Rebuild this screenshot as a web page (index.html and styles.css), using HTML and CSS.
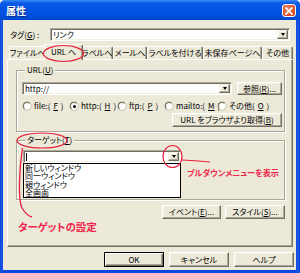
FILE: index.html
```html
<!DOCTYPE html>
<html lang="ja">
<head>
<meta charset="utf-8">
<title>属性</title>
<link rel="stylesheet" href="styles.css">
</head>
<body>
<div class="window">
  <div class="titlebar">
    <span class="title">属性</span>
    <span class="close"><svg width="8" height="8" viewBox="0 0 8 8"><path d="M1 1L7 7M7 1L1 7" stroke="#fff" stroke-width="1.7" stroke-linecap="square"/></svg></span>
  </div>
  <div class="client">
    <div class="tagrow">
      <span class="lbl">タグ(<u>G</u>) :</span>
      <div class="combo tagcombo"><span class="val">リンク</span><span class="drop"><i></i></span></div>
    </div>
    <div class="tabs">
      <div class="tabbar">
        <span class="tab t1">ファイルへ</span>
        <span class="tab t2 active">URL へ</span>
        <span class="tab t3">ラベルへ</span>
        <span class="tab t4">メールへ</span>
        <span class="tab t5">ラベルを付ける</span>
        <span class="tab t6">未保存ページへ</span>
        <span class="tab t7">その他</span>
      </div>
      <div class="panel">
        <fieldset class="group urlgroup">
          <legend>URL(<u>U</u>)</legend>
          <div class="urlrow">
            <div class="combo urlcombo"><span class="val">http://</span><span class="drop"><i></i></span></div>
            <span class="btn browse">参照(<u>R</u>)...</span>
          </div>
          <div class="radios">
            <span class="radio r1"><i class="dot"></i>file:(<u>F</u>)</span>
            <span class="radio r2"><i class="dot on"></i>http:(<u>H</u>)</span>
            <span class="radio r3"><i class="dot"></i>ftp:(<u>P</u>)</span>
            <span class="radio r4"><i class="dot"></i>mailto:(<u>M</u>)</span>
            <span class="radio r5"><i class="dot"></i>その他(<u>O</u>)</span>
          </div>
          <div class="getrow"><span class="btn getbtn">URL をブラウザより取得(<u>B</u>)</span></div>
        </fieldset>
        <fieldset class="group targetgroup">
          <legend>ターゲット(<u>T</u>)</legend>
          <div class="tcombo-wrap">
            <div class="combo tcombo"><span class="val"><span class="caret"></span></span><span class="drop"><i></i></span></div>
            <ul class="dropdown">
              <li>新しいウィンドウ</li>
              <li>同一ウィンドウ</li>
              <li>親ウィンドウ</li>
              <li>全画面</li>
            </ul>
          </div>
        </fieldset>
        <div class="trow">
          <span class="btn evbtn">イベント(<u>E</u>)...</span>
          <span class="btn stbtn">スタイル(<u>S</u>)...</span>
        </div>
      </div>
    </div>
    <div class="footer">
      <span class="btn fbtn default">OK</span>
      <span class="btn fbtn">キャンセル</span>
      <span class="btn fbtn">ヘルプ</span>
    </div>
  </div>
  <svg class="annot" width="300" height="273" viewBox="0 0 300 273">
    <ellipse cx="63.5" cy="53.5" rx="20" ry="8" fill="none" stroke="#e8203c" stroke-width="1.2"/>
    <ellipse cx="42" cy="140.5" rx="25" ry="7.5" fill="none" stroke="#e8203c" stroke-width="1.2"/>
    <path d="M22.5 148 C19 170 18 200 22 208 C25 213 28 216 32 217" fill="none" stroke="#e8203c" stroke-width="1.3"/>
    <ellipse cx="172.5" cy="156.5" rx="9.5" ry="11" fill="none" stroke="#e8203c" stroke-width="1.2"/>
    <path d="M182 160 L196 160.8 L210 162" fill="none" stroke="#e8203c" stroke-width="1"/>
  </svg>
  <span class="note n1">プルダウンメニューを表示</span>
  <span class="note n2">ターゲットの設定</span>
</div>
</body>
</html>
```
FILE: styles.css
```css
* { box-sizing: border-box; }
html, body { margin: 0; padding: 0; }
body {
  width: 300px;
  height: 273px;
  overflow: hidden;
  font-family: "Noto Sans CJK JP", "Liberation Sans", sans-serif;
  font-size: 8px;
  font-feature-settings: "palt";
  color: #000;
  background: #ffffff;
}
u { text-decoration: underline; text-underline-offset: 1px; }

.window {
  position: relative;
  width: 300px;
  height: 273px;
  display: flex;
  flex-direction: column;
  border-radius: 5px 5px 0 0;
  background: linear-gradient(to right, #0a37c8 0, #1a5ceb 1px, #0d47dc 3px, #0d47dc 296px, #1a5ceb 298px, #0a37c8 300px);
}

.titlebar {
  height: 20px;
  flex: none;
  display: flex;
  align-items: center;
  padding-left: 6px;
  padding-right: 4px;
  background: linear-gradient(to bottom, #3c8cf6 0, #0a5ae8 3px, #0354e3 9px, #0051df 15px, #0046cc 20px);
  border-radius: 5px 5px 0 0;
}
.title {
  color: #fff;
  font-weight: bold;
  font-size: 10px;
  line-height: 10px;
  text-shadow: 1px 1px #0a2c8c;
  flex: 1;
  padding-top: 1px;
}
.close {
  width: 14px;
  height: 13px;
  margin-top: 1px;
  border: 1px solid #fff;
  border-radius: 3px;
  background: radial-gradient(circle at 40% 35%, #f08a6c, #e0572e 55%, #c9401c);
  display: flex;
  align-items: center;
  justify-content: center;
}

.client {
  flex: 1;
  margin: 0 4px 3px 3px;
  background: #ece9d8;
  display: flex;
  flex-direction: column;
}

/* classic 3D helpers */
.combo {
  position: relative;
  background: #fff;
  border: 1px solid;
  border-color: #aca899 #fff #fff #aca899;
  box-shadow: inset 1px 1px #716f64, inset -1px -1px #f1efe2;
  display: flex;
  align-items: center;
}
.combo .val {
  flex: 1;
  padding-left: 2px;
  line-height: 10px;
  white-space: nowrap;
}
.combo .drop {
  width: 11px;
  height: calc(100% - 2px);
  margin-right: 1px;
  background: #ece9d8;
  border: 1px solid;
  border-color: #f1efe2 #716f64 #716f64 #f1efe2;
  box-shadow: inset -1px -1px #aca899, inset 1px 1px #fff;
  display: flex;
  align-items: center;
  justify-content: center;
}
.combo .drop i {
  width: 0;
  height: 0;
  border-left: 2.5px solid transparent;
  border-right: 2.5px solid transparent;
  border-top: 3px solid #000;
}

.btn {
  display: inline-flex;
  align-items: center;
  justify-content: center;
  background: #ece9d8;
  border: 1px solid;
  border-color: #fff #716f64 #716f64 #fff;
  box-shadow: inset -1px -1px #aca899, inset 1px 1px #f1efe2;
  white-space: nowrap;
  line-height: 10px;
}

/* tag row */
.tagrow {
  display: flex;
  align-items: center;
  padding: 8px 6px 0 7px;
}
.lbl { width: 40px; line-height: 10px; }
.tagcombo { width: 240px; height: 13px; }

/* tabs */
.tabs {
  margin: 3px 3px 0 4px;
  display: flex;
  flex-direction: column;
}
.tabbar {
  height: 15px;
  display: flex;
  align-items: flex-end;
  padding-left: 2px;
}
.tab {
  height: 13px;
  display: flex;
  align-items: center;
  justify-content: center;
  border-top: 1px solid #fff;
  border-left: 1px solid #fff;
  border-right: 1px solid #716f64;
  box-shadow: inset -1px 0 #aca899;
  border-radius: 2px 2px 0 0;
  white-space: nowrap;
  line-height: 10px;
  background: #ece9d8;
}
.tab.active {
  height: 16px;
  margin: 0 -2px -1px -2px;
  position: relative;
  z-index: 1;
  align-items: flex-start;
  padding-top: 2px;
}
.t1 { width: 37px; }
.t2 { width: 39px; }
.t3 { width: 32px; }
.t4 { width: 34px; }
.t5 { width: 56px; }
.t6 { width: 59px; }
.t7 { width: 31px; }

.panel {
  height: 188px;
  border: 1px solid;
  border-color: #fff #716f64 #716f64 #fff;
  box-shadow: inset -1px -1px #aca899;
  padding: 5px 7px 0 8px;
  display: flex;
  flex-direction: column;
}

fieldset.group {
  margin: 0;
  padding: 0 2px 4px 5px;
  min-inline-size: 0;
  border: 1px solid #aca899;
  box-shadow: inset 1px 1px #fff, 1px 1px #fff;
}
fieldset.group legend {
  padding: 0 2px;
  margin-left: 3px;
  line-height: 10px;
  height: 10px;
  background: #ece9d8;
}

.urlrow {
  margin-top: 7px;
  display: flex;
  gap: 5px;
}
.urlcombo { width: 210px; height: 13px; }
.browse { width: 45px; height: 13px; }

.radios {
  margin-top: 6px;
  height: 10px;
  display: flex;
  align-items: center;
  padding-left: 1px;
}
.radio {
  display: flex;
  align-items: center;
  gap: 3px;
  line-height: 10px;
  white-space: nowrap;
}
.r1 { width: 47px; }
.r2 { width: 48px; }
.r3 { width: 47px; }
.r4 { width: 53px; }
.dot {
  width: 8px;
  height: 8px;
  border-radius: 50%;
  background: #fff;
  border: 1px solid;
  border-color: #716f64 #f1efe2 #f1efe2 #716f64;
  box-shadow: 0 0 0 0.5px #aca899;
  display: flex;
  align-items: center;
  justify-content: center;
  flex: none;
}
.dot.on::after {
  content: "";
  width: 3px;
  height: 3px;
  border-radius: 50%;
  background: #000;
}

.getrow {
  margin-top: 2px;
  display: flex;
  justify-content: flex-end;
}
.getbtn { width: 110px; height: 14px; }

fieldset.targetgroup {
  margin-top: 3px;
  padding-bottom: 36px;
}
.tcombo-wrap {
  position: relative;
  margin-top: 5px;
  margin-left: 1px;
  width: 158px;
}
.tcombo { height: 13px; }
.caret {
  display: inline-block;
  width: 1px;
  height: 8px;
  background: #000;
  vertical-align: middle;
}
.dropdown {
  position: absolute;
  top: 13px;
  left: 0;
  width: 158px;
  margin: 0;
  padding: 0 0 0 1px;
  list-style: none;
  background: #fff;
  border: 1px solid #000;
  height: 35px;
  font-size: 8px;
  line-height: 8.25px;
  z-index: 2;
}
.trow {
  margin-top: 5px;
  display: flex;
  justify-content: flex-end;
  gap: 4px;
}
.evbtn { width: 59px; height: 14px; }
.stbtn { width: 60px; height: 14px; }

.footer {
  margin-top: 5px;
  padding-right: 2px;
  display: flex;
  justify-content: flex-end;
  gap: 5px;
}
.fbtn { width: 60px; height: 15px; }
.fbtn.default {
  border: 1px solid #000;
  box-shadow: inset 1px 1px #fff, inset -1px -1px #716f64, inset -2px -2px #aca899;
}

/* annotations */
.annot {
  position: absolute;
  left: 0;
  top: 0;
  pointer-events: none;
  z-index: 5;
}
.note {
  position: absolute;
  color: #f0254b;
  font-weight: bold;
  white-space: nowrap;
  z-index: 5;
}
.n1 { left: 187px; top: 168px; font-size: 8.1px; line-height: 10px; }
.n2 { left: 18px; top: 221px; font-size: 10.5px; line-height: 11px; }
```
